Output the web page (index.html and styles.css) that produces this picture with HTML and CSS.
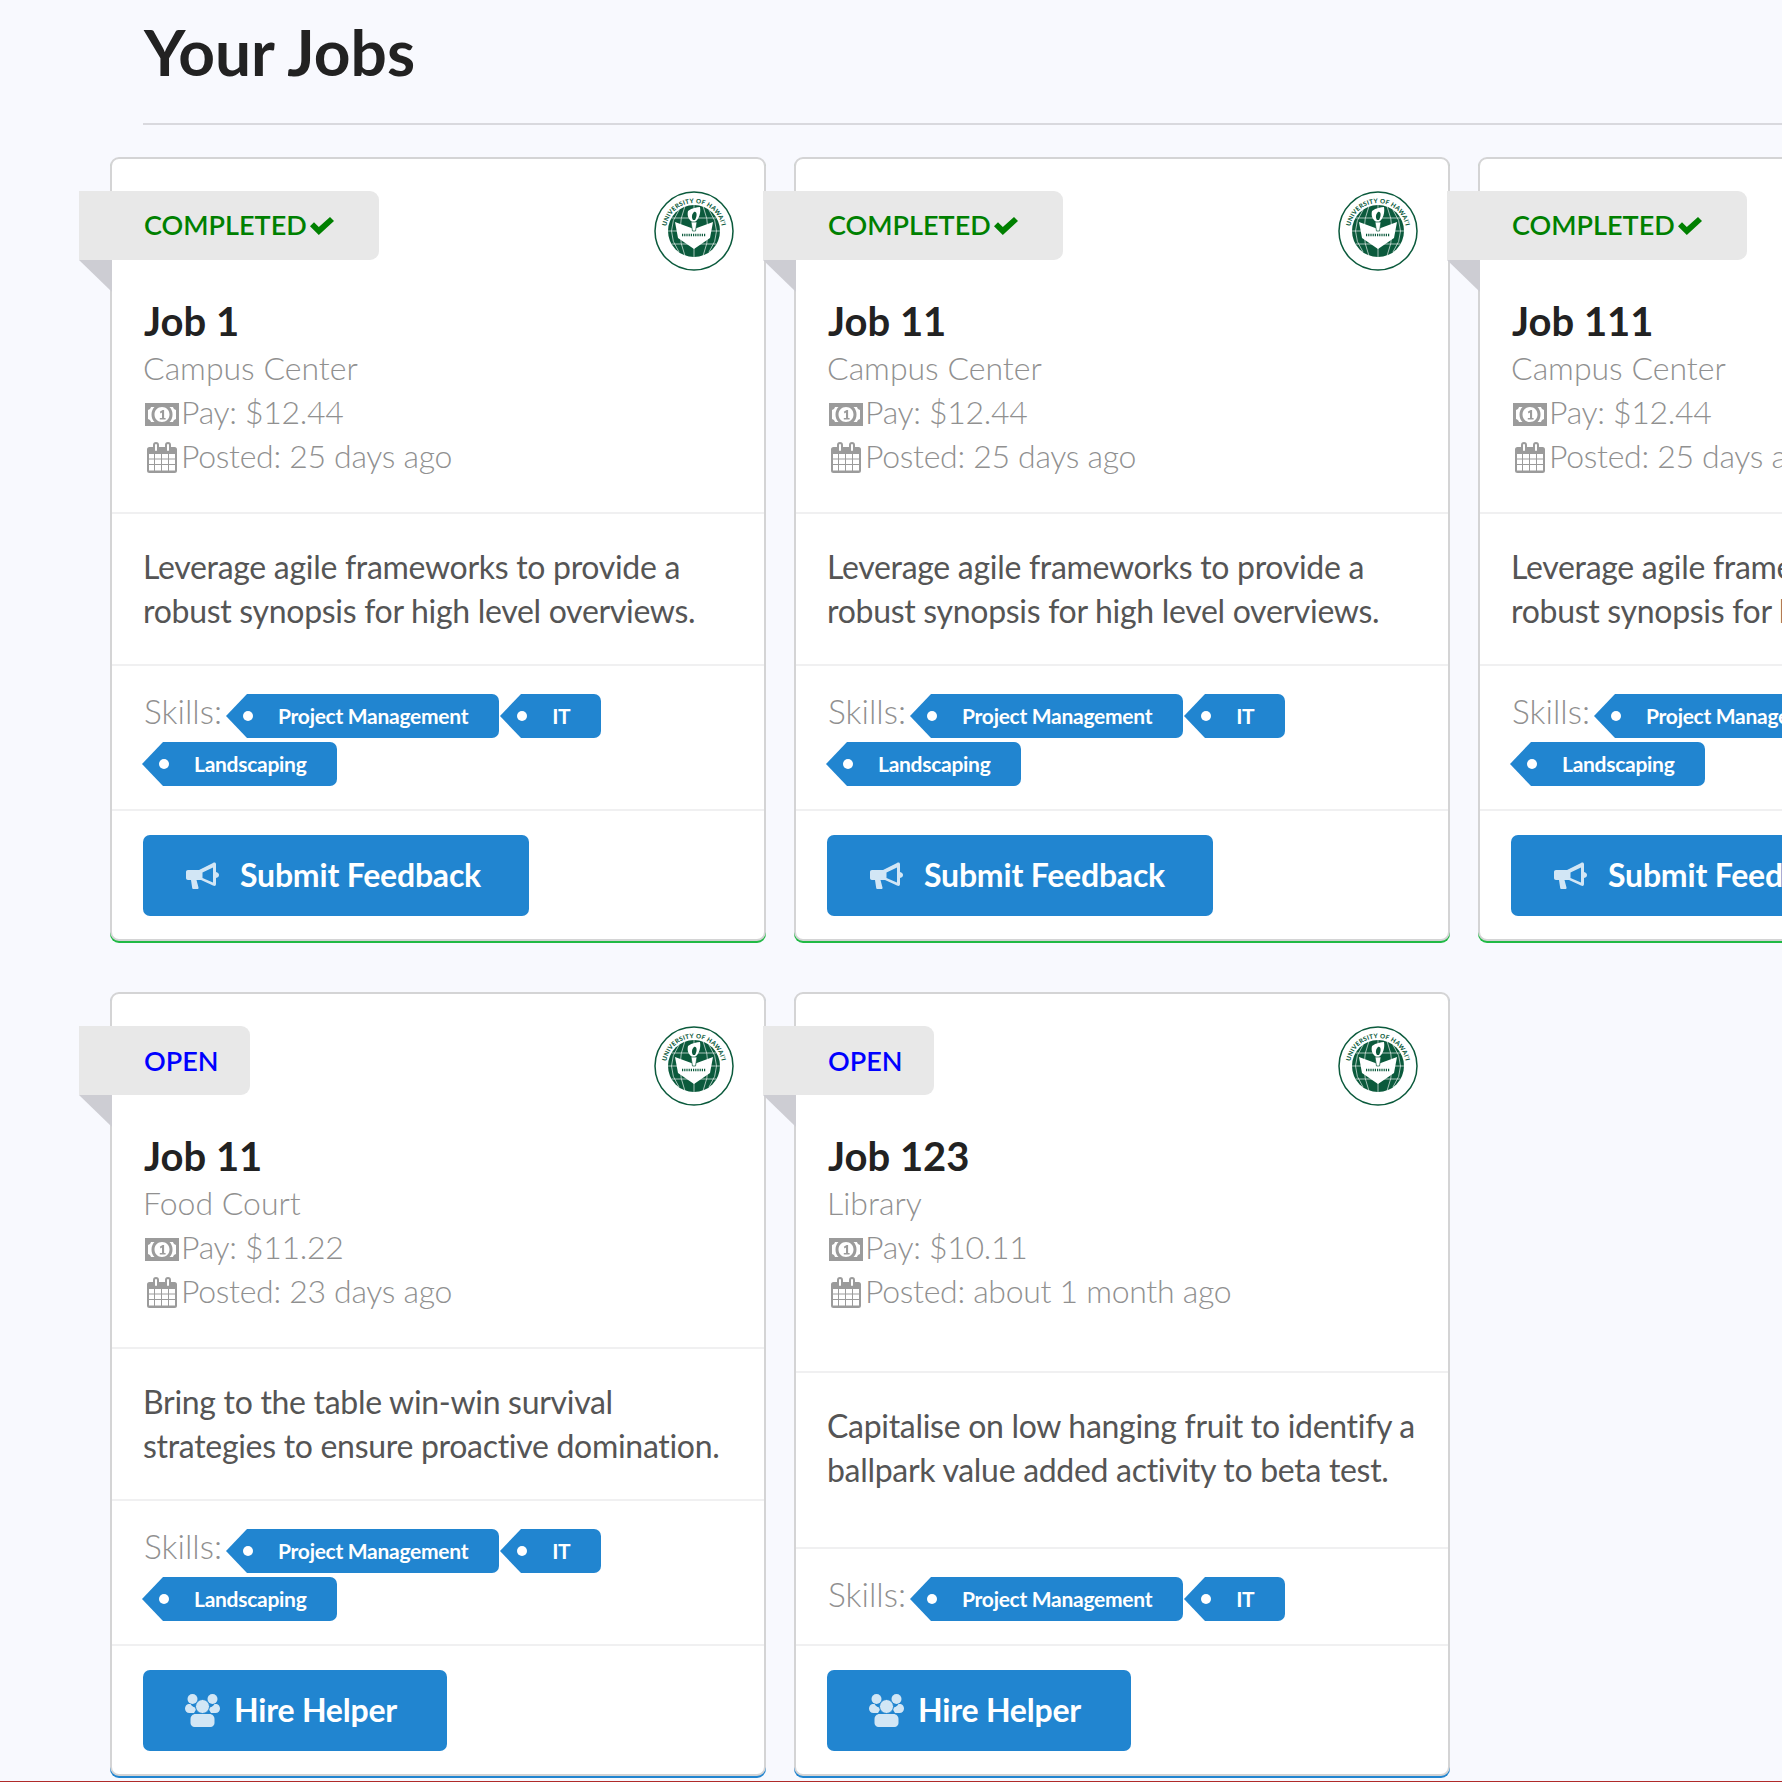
FILE: index.html
```html
<!DOCTYPE html>
<html lang="en">
<head>
  <meta charset="utf-8" />
  <title>Your Jobs</title>
  <meta name="viewport" content="width=device-width, initial-scale=1" />
  <link rel="stylesheet" href="styles.css">
</head>
<body>
  <svg class="defs" width="0" height="0">
    <defs>
      <symbol id="i-money" viewBox="0 0 34 23">
        <path fill-rule="evenodd" d="M0 0h34v23H0z M6 4h3.500c-2 2-3 4.500-3 7.500s1 5.500 3 7.500H6c-.3-1.500-1.500-2.700-3-3V7c1.500-.3 2.700-1.500 3-3z M28 4h-3.500c2 2 3 4.500 3 7.500s-1 5.500-3 7.500H28c.3-1.500 1.500-2.700 3-3V7c-1.500-.3-2.700-1.500-3-3z M17 4c4.400 0 7.500 3.300 7.500 7.500S21.400 19 17 19s-7.500-3.300-7.500-7.500S12.600 4 17 4z"/>
        <path d="M14.800 8.800l2.800-1.800h1.500v7.900h1.500v1.700h-5.800v-1.700h2.200V9.600l-1.400.9z"/>
      </symbol>
      <symbol id="i-cal" viewBox="0 0 30 31">
        <path fill-rule="evenodd" d="M2.500 5H6V3a3 3 0 0 1 6 0v2h6V3a3 3 0 0 1 6 0v2h3.500A2.500 2.500 0 0 1 30 7.500v21a2.500 2.500 0 0 1-2.500 2.500h-25A2.500 2.500 0 0 1 0 28.500v-21A2.500 2.500 0 0 1 2.500 5z M2 12v4.500h5V12z M8 12v4.500h6V12z M15 12v4.500h6V12z M22 12v4.500h6V12z M2 17.500V22h5v-4.500z M8 17.500V22h6v-4.500z M15 17.500V22h6v-4.500z M22 17.500V22h6v-4.500z M2 23v5.500h5V23z M8 23v5.500h6V23z M15 23v5.500h6V23z M22 23v5.500h6V23z M8 3v5a1 1 0 0 0 2 0V3a1 1 0 0 0-2 0z M20 3v5a1 1 0 0 0 2 0V3a1 1 0 0 0-2 0z"/>
      </symbol>
      <symbol id="i-check" viewBox="0 0 24 18">
        <path d="M8.800 18 0 9.200l4-4 4.800 4.800L20 0l4 4z"/>
      </symbol>
      <symbol id="i-bullhorn" viewBox="0 0 33 28">
        <path fill-rule="evenodd" d="M2 8h11L27 1c1.500-1 3-.5 3 1.500V10c2 .5 3 1.500 3 3s-1 2.500-3 3v6c0 2-1.500 2.500-3 1.500L15 18H10.500l2 7.500c.2 1-.4 1.500-1.200 1.500H7.500c-.7 0-1.200-.4-1.300-1L5 18H2c-1.200 0-2-.8-2-2v-6c0-1.200.8-2 2-2z M16.500 10.500v5.500l10.500 4.500V5.500z"/>
      </symbol>
      <symbol id="i-users" viewBox="0 0 35 33">
        <circle cx="7.500" cy="5" r="5"/><circle cx="27.500" cy="5" r="5"/>
        <path d="M3.500 10C1.500 10.500 0 12.200 0 14.500 0 17 1.800 19 4.500 19H9l3-5c-2.500-.2-5.500-2-6.500-4zM31.500 10c2 .5 3.500 2.200 3.500 4.500 0 2.500-1.800 4.500-4.500 4.500H26l-3-5c2.500-.2 5.500-2 6.500-4z"/>
        <circle cx="17.500" cy="12.500" r="7" stroke="#2185d0" stroke-width="1"/>
        <path d="M10.500 20h14c2.800 0 5 2.200 5 5v4c0 2.200-1.800 4-4 4h-16c-2.200 0-4-1.800-4-4v-4c0-2.800 2.200-5 5-5z"/>
      </symbol>
      <symbol id="seal" viewBox="0 0 80 80">
        <circle cx="40" cy="40" r="39" fill="#fff" stroke="#0b5a3c" stroke-width="1.500"/>
        <circle cx="40" cy="40" r="26" fill="#0b5a3c"/>
        <path d="M40 14v52M25 19q-15 21 0 42M55 19q15 21 0 42M14 40h52M18 27h44M18 53h44M31 15q-10 25 0 50M49 15q10 25 0 50" fill="none" stroke="#fff" stroke-width=".8" opacity=".8"/>
        <path d="M21 31l19 7 19-7-3 16-16 11-16-11z" fill="#fff"/>
        <path d="M34 20c4-3 9-4 12-4 1 6-1 12-5 15h-3c-4-3-5-7-4-11z" fill="#fff"/>
        <path d="M40 21c3-1 3.500 4 1 8h-2c-2-3-1-6 1-8z" fill="#0b5a3c"/>
        <path d="M37 31h6l-1.500 9h-3z" fill="#fff" stroke="#0b5a3c" stroke-width=".7"/>
        <path d="M28 44h24" stroke="#0b5a3c" stroke-width="2.500" stroke-dasharray="1.200 1"/>
        <path id="seal-top" d="M40 68A28 28 0 1 1 40.010 68" fill="none"/>
        <path id="seal-bottom" d="M40 5.500A34.500 34.500 0 1 0 39.990 5.500" fill="none"/>
        <text class="seal-top"><textPath href="#seal-top" startOffset="50%" text-anchor="middle">UNIVERSITY OF HAWAI'I</textPath></text>
        <text class="seal-bottom"><textPath href="#seal-bottom" startOffset="50%" text-anchor="middle">UA MAU KE EA O KA 'AINA I KA PONO</textPath></text>
      </symbol>
    </defs>
  </svg>

  <main class="page">
    <h1 class="page-title">Your Jobs</h1>
    <hr class="page-rule">

    <div class="cards">
      <article class="card card-done">
        <div class="top">
          <div class="ribbon status-done">COMPLETED<svg class="check"><use href="#i-check"/></svg></div>
          <svg class="seal"><use href="#seal"/></svg>
        </div>
        <div class="info">
          <h2>Job 1</h2>
          <p>Campus Center</p>
          <p><svg class="ico-money"><use href="#i-money"/></svg>Pay: $12.44</p>
          <p><svg class="ico-cal"><use href="#i-cal"/></svg>Posted: 25 days ago</p>
        </div>
        <div class="desc">Leverage agile frameworks to provide a robust synopsis for high level overviews.</div>
        <div class="skills">
          <span class="skills-label">Skills:</span>
          <span class="tag">Project Management</span>
          <span class="tag">IT</span>
          <span class="tag">Landscaping</span>
        </div>
        <div class="actions"><a class="btn btn-feedback"><svg class="ico-horn"><use href="#i-bullhorn"/></svg>Submit Feedback</a></div>
      </article>

      <article class="card card-done">
        <div class="top">
          <div class="ribbon status-done">COMPLETED<svg class="check"><use href="#i-check"/></svg></div>
          <svg class="seal"><use href="#seal"/></svg>
        </div>
        <div class="info">
          <h2>Job 11</h2>
          <p>Campus Center</p>
          <p><svg class="ico-money"><use href="#i-money"/></svg>Pay: $12.44</p>
          <p><svg class="ico-cal"><use href="#i-cal"/></svg>Posted: 25 days ago</p>
        </div>
        <div class="desc">Leverage agile frameworks to provide a robust synopsis for high level overviews.</div>
        <div class="skills">
          <span class="skills-label">Skills:</span>
          <span class="tag">Project Management</span>
          <span class="tag">IT</span>
          <span class="tag">Landscaping</span>
        </div>
        <div class="actions"><a class="btn btn-feedback"><svg class="ico-horn"><use href="#i-bullhorn"/></svg>Submit Feedback</a></div>
      </article>

      <article class="card card-done">
        <div class="top">
          <div class="ribbon status-done">COMPLETED<svg class="check"><use href="#i-check"/></svg></div>
          <svg class="seal"><use href="#seal"/></svg>
        </div>
        <div class="info">
          <h2>Job 111</h2>
          <p>Campus Center</p>
          <p><svg class="ico-money"><use href="#i-money"/></svg>Pay: $12.44</p>
          <p><svg class="ico-cal"><use href="#i-cal"/></svg>Posted: 25 days ago</p>
        </div>
        <div class="desc">Leverage agile frameworks to provide a robust synopsis for high level overviews.</div>
        <div class="skills">
          <span class="skills-label">Skills:</span>
          <span class="tag">Project Management</span>
          <span class="tag">IT</span>
          <span class="tag">Landscaping</span>
        </div>
        <div class="actions"><a class="btn btn-feedback"><svg class="ico-horn"><use href="#i-bullhorn"/></svg>Submit Feedback</a></div>
      </article>

      <article class="card card-open">
        <div class="top">
          <div class="ribbon status-open">OPEN</div>
          <svg class="seal"><use href="#seal"/></svg>
        </div>
        <div class="info">
          <h2>Job 11</h2>
          <p>Food Court</p>
          <p><svg class="ico-money"><use href="#i-money"/></svg>Pay: $11.22</p>
          <p><svg class="ico-cal"><use href="#i-cal"/></svg>Posted: 23 days ago</p>
        </div>
        <div class="desc">Bring to the table win-win survival strategies to ensure proactive domination.</div>
        <div class="skills">
          <span class="skills-label">Skills:</span>
          <span class="tag">Project Management</span>
          <span class="tag">IT</span>
          <span class="tag">Landscaping</span>
        </div>
        <div class="actions"><a class="btn btn-hire"><svg class="ico-users"><use href="#i-users"/></svg>Hire Helper</a></div>
      </article>

      <article class="card card-open">
        <div class="top">
          <div class="ribbon status-open">OPEN</div>
          <svg class="seal"><use href="#seal"/></svg>
        </div>
        <div class="info">
          <h2>Job 123</h2>
          <p>Library</p>
          <p><svg class="ico-money"><use href="#i-money"/></svg>Pay: $10.11</p>
          <p><svg class="ico-cal"><use href="#i-cal"/></svg>Posted: about 1 month ago</p>
        </div>
        <div class="desc">Capitalise on low hanging fruit to identify a ballpark value added activity to beta test.</div>
        <div class="skills">
          <span class="skills-label">Skills:</span>
          <span class="tag">Project Management</span>
          <span class="tag">IT</span>
        </div>
        <div class="actions"><a class="btn btn-hire"><svg class="ico-users"><use href="#i-users"/></svg>Hire Helper</a></div>
      </article>
    </div>
  </main>
  <div class="page-end"></div>
</body>
</html>
```
FILE: styles.css
```css
:root {
  --blue: #2185d0;
  --line: #f0f0f1;
  --meta: #909090;
  --icon: #9b9b9b;
  --text: #222222;
}

* { box-sizing: border-box; margin: 0; padding: 0; }

html, body {
  height: 1782px;
  overflow: hidden;
}

body {
  font-family: Lato, "Open Sans", sans-serif;
  background: #f8f9fe;
  color: var(--text);
}

.defs { position: absolute; }

.page {
  height: 1781px;
  padding: 0 0 0 143px;
}

.page-end {
  height: 1px;
  background: #b02a2a;
}

.page-title {
  font-size: 64px;
  font-weight: 700;
  line-height: 80px;
  padding-top: 12px;
  padding-left: 1px;
  margin-bottom: 31px;
}

.page-rule {
  border: 0;
  border-top: 2px solid #d9d9de;
  margin-bottom: 32px;
}

.cards {
  display: grid;
  grid-template-columns: repeat(3, 656px);
  column-gap: 28px;
  row-gap: 51px;
  margin-left: -33px;
  width: 2100px;
}

.card {
  display: flex;
  flex-direction: column;
  background: #fff;
  border-radius: 9px;
  border: 2px solid #d4d4d5;
  height: 784px;
}

.card-done { box-shadow: 0 2px 0 #21ba45; }
.card-open { box-shadow: 0 2px 0 var(--blue); }

.top {
  display: flex;
  justify-content: space-between;
  align-items: flex-start;
  padding: 32px 30px 0 0;
  height: 113px;
}

.ribbon {
  position: relative;
  display: flex;
  align-items: center;
  margin-left: -33px;
  height: 69px;
  padding: 0 32px 0 65px;
  background: #e8e8e8;
  border-radius: 0 9px 9px 0;
  font-size: 27px;
  font-weight: 600;
}

.ribbon::after {
  content: "";
  position: absolute;
  left: 0;
  top: 100%;
  border-style: solid;
  border-width: 0 33px 32px 0;
  border-color: transparent #cdcdd3 transparent transparent;
}

.status-done { color: #008000; padding-bottom: 2px; }
.status-open { color: #0000ff; }

.check {
  width: 24px;
  height: 18px;
  margin: 2px 13px 0 3px;
  fill: #008000;
}

.seal {
  width: 80px;
  height: 80px;
}

.seal-top {
  font-size: 6.200px;
  font-weight: 900;
  fill: #0b5a3c;
  letter-spacing: .3px;
}

.seal-bottom {
  font-size: 4.900px;
  font-weight: 900;
  fill: #0b5a3c;
}

.info {
  flex: 1 1 auto;
  padding: 25px 31px 33px;
  font-size: 32px;
  font-weight: 300;
  line-height: 44px;
  color: var(--meta);
  border-bottom: 2px solid var(--line);
}

.info h2 {
  font-size: 40px;
  font-weight: 700;
  line-height: 48px;
  color: var(--text);
  margin: 0 0 1px 1px;
}

.info p + p { letter-spacing: -.3px; }

.info p svg {
  fill: var(--icon);
}

.ico-money { width: 34px; height: 23px; margin: 0 2px 0 2px; vertical-align: -2px; }
.ico-cal { width: 30px; height: 31px; margin: 0 4px 0 4px; vertical-align: -5px; }

.desc {
  flex: 1 1 auto;
  padding: 31px 31px;
  font-size: 32px;
  line-height: 44px;
  letter-spacing: -.3px;
  color: #555555;
  border-bottom: 2px solid var(--line);
}

.skills {
  display: flex;
  flex-wrap: wrap;
  align-items: flex-start;
  gap: 4px 0;
  padding: 28px 31px 23px 32px;
  border-bottom: 2px solid var(--line);
}

.skills-label {
  font-size: 33.500px;
  font-weight: 300;
  line-height: 35px;
  color: var(--meta);
  margin-right: 4px;
}

.tag {
  position: relative;
  display: flex;
  align-items: center;
  height: 44px;
  margin-left: 21px;
  margin-right: 1px;
  padding: 0 31px 2px;
  background: var(--blue);
  border-radius: 0 7px 7px 0;
  color: #fff;
  font-size: 21px;
  font-weight: 700;
  letter-spacing: -.28px;
}

.tag:nth-child(4) { margin-left: 19px; }

.tag::before {
  content: "";
  position: absolute;
  left: -21px;
  top: 0;
  border-style: solid;
  border-width: 22px 21px 22px 0;
  border-color: transparent var(--blue) transparent transparent;
}

.tag::after {
  content: "";
  position: absolute;
  left: -4px;
  top: 17px;
  width: 10px;
  height: 10px;
  border-radius: 50%;
  background: #fff;
}

.actions {
  padding: 24px 31px 23px;
}

.btn {
  display: inline-flex;
  align-items: center;
  height: 81px;
  background: var(--blue);
  border-radius: 7px;
  color: #fff;
  font-size: 32px;
  font-weight: 700;
  letter-spacing: -.2px;
  padding-bottom: 2px;
}

.btn-feedback { padding-left: 43px; padding-right: 48px; }
.btn-hire { padding-left: 42px; padding-right: 50px; }

.btn svg { fill: #fff; opacity: .8; margin-top: 2px; }

.ico-horn { width: 33px; height: 28px; margin-right: 21px; }
.ico-users { width: 35px; height: 33px; margin-right: 14px; }
```
